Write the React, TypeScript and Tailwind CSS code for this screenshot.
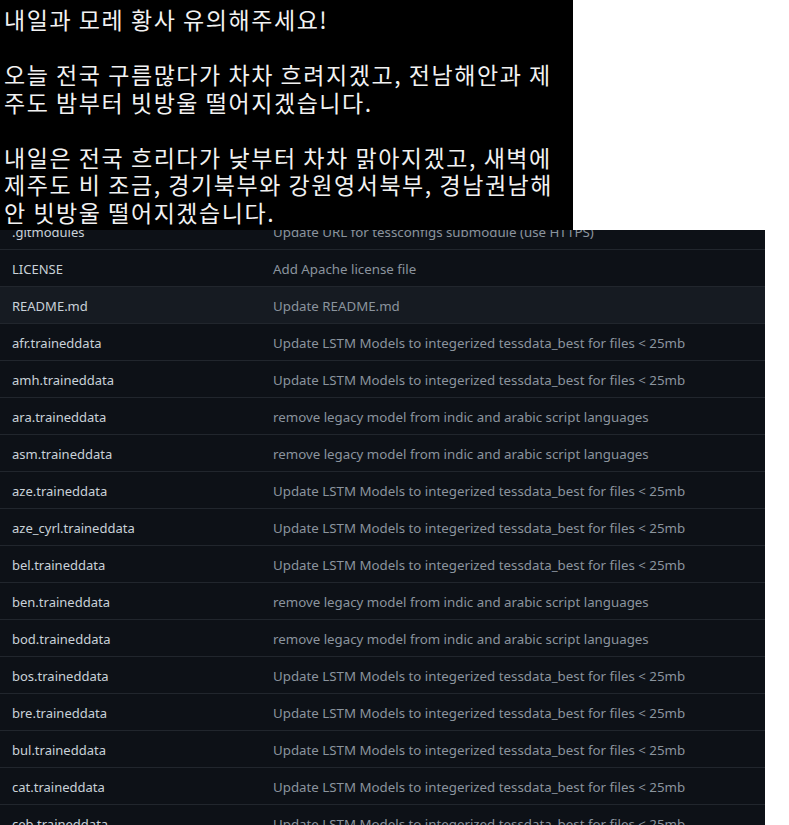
import React from "react";

const rows: [string, string][] = [
  [".gitmodules", "Update URL for tessconfigs submodule (use HTTPS)"],
  ["LICENSE", "Add Apache license file"],
  ["README.md", "Update README.md"],
  ["afr.traineddata", "Update LSTM Models to integerized tessdata_best for files < 25mb"],
  ["amh.traineddata", "Update LSTM Models to integerized tessdata_best for files < 25mb"],
  ["ara.traineddata", "remove legacy model from indic and arabic script languages"],
  ["asm.traineddata", "remove legacy model from indic and arabic script languages"],
  ["aze.traineddata", "Update LSTM Models to integerized tessdata_best for files < 25mb"],
  ["aze_cyrl.traineddata", "Update LSTM Models to integerized tessdata_best for files < 25mb"],
  ["bel.traineddata", "Update LSTM Models to integerized tessdata_best for files < 25mb"],
  ["ben.traineddata", "remove legacy model from indic and arabic script languages"],
  ["bod.traineddata", "remove legacy model from indic and arabic script languages"],
  ["bos.traineddata", "Update LSTM Models to integerized tessdata_best for files < 25mb"],
  ["bre.traineddata", "Update LSTM Models to integerized tessdata_best for files < 25mb"],
  ["bul.traineddata", "Update LSTM Models to integerized tessdata_best for files < 25mb"],
  ["cat.traineddata", "Update LSTM Models to integerized tessdata_best for files < 25mb"],
  ["ceb.traineddata", "Update LSTM Models to integerized tessdata_best for files < 25mb"],
];

const lines = [
  "내일과 모레 황사 유의해주세요!",
  "",
  "오늘 전국 구름많다가 차차 흐려지겠고, 전남해안과 제",
  "주도 밤부터 빗방울 떨어지겠습니다.",
  "",
  "내일은 전국 흐리다가 낮부터 차차 맑아지겠고, 새벽에",
  "제주도 비 조금, 경기북부와 강원영서북부, 경남권남해",
  "안 빗방울 떨어지겠습니다.",
];

export default function App() {
  return (
    <div className="w-[789px] h-[825px] overflow-hidden bg-white">
      <div className="w-[573px] h-[230px] bg-black text-[#f2f2f2] pl-[4px] pt-[6px] text-[23px] tracking-[1.55px] leading-[27.5px] font-['Noto_Sans_CJK_KR','Noto_Sans',sans-serif] whitespace-nowrap overflow-hidden">
        {lines.map((l, i) => (
          <div key={i} className="h-[27.5px]">{l}</div>
        ))}
      </div>
      <div className="w-[765px] h-[595px] overflow-hidden bg-[#0d1117]">
        <div className="-mt-[17px] font-['Noto_Sans',sans-serif] text-[13px]">
          {rows.map(([f, m], i) => (
            <div
              key={i}
              className={`flex items-center h-[37px] pt-[3px] border-b border-[#21262d] ${
                f === "README.md" ? "bg-[#161b22]" : ""
              }`}
            >
              <div className="w-[273px] shrink-0 pl-[12px] text-[#c9d1d9] whitespace-nowrap">{f}</div>
              <div className="text-[#8b949e] text-[13.3px] whitespace-nowrap">{m}</div>
            </div>
          ))}
        </div>
      </div>
    </div>
  );
}
